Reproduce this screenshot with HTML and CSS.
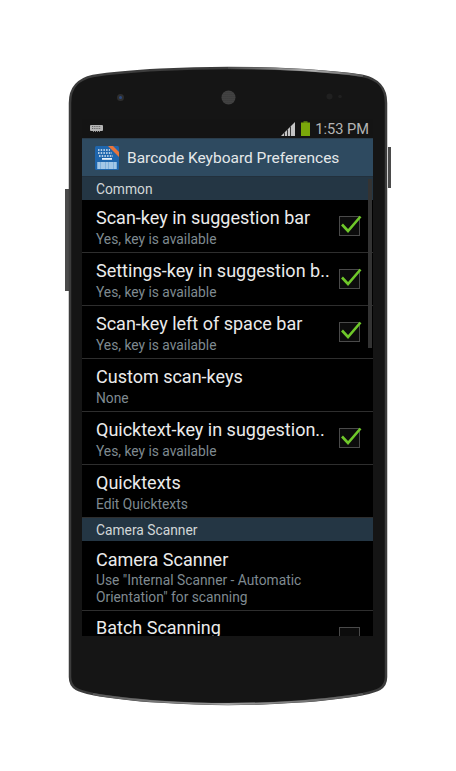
FILE: index.html
```html
<!DOCTYPE html>
<html lang="en">
<head>
  <meta charset="UTF-8" />
  <title>Barcode Keyboard Preferences</title>
  <link rel="stylesheet" href="styles.css">
</head>
<body>

  <div class="phone">
    <svg class="phone-body" width="328" height="640" viewBox="64 66 328 640">
      <defs>
        <linearGradient id="glint-top" gradientUnits="userSpaceOnUse" x1="230" y1="0" x2="365" y2="0">
          <stop offset="0" stop-color="#4a4a4a" />
          <stop offset="0.6" stop-color="#b0b0b0" />
          <stop offset="1" stop-color="#555555" />
        </linearGradient>
        <linearGradient id="glint-bottom" gradientUnits="userSpaceOnUse" x1="93" y1="0" x2="363" y2="0">
          <stop offset="0" stop-color="#555555" />
          <stop offset="0.5" stop-color="#a0a0a0" />
          <stop offset="1" stop-color="#555555" />
        </linearGradient>
        <pattern id="mesh" width="2" height="2" patternUnits="userSpaceOnUse">
          <rect width="2" height="2" fill="#333333" />
          <circle cx="1" cy="1" r="0.600" fill="#6a6a6a" />
        </pattern>
      </defs>
      <rect class="side-key" x="388" y="147" width="3" height="41" />
      <rect class="side-key" x="65" y="189" width="5" height="102" />
      <path class="shell" d="M70 103 C70 86 79 79 93 76 C130 70 190 68 228 68 C266 68 326 70 363 76 C377 79 386 86 386 103 L386 677 C386 689 377 691 363 694 C326 701 266 704 228 704 C190 704 130 701 93 694 C79 691 70 689 70 677 Z" />
      <path class="glint top" d="M228 68 C266 68 326 70 363 76" />
      <path class="glint bottom" d="M93 694 C130 701 190 704 228 704 C266 704 326 701 363 694" />
      <circle class="lens" cx="120.500" cy="97.500" r="3.500" />
      <circle class="lens-dot" cx="120.500" cy="97.500" r="1.500" />
      <circle class="speaker" cx="228.500" cy="97.500" r="7" />
      <circle class="sensor" cx="329.500" cy="96.500" r="3" />
      <circle class="sensor" cx="340" cy="96.500" r="1.800" />
    </svg>

    <div class="screen">
      <div class="status-bar">
        <svg class="kbd-note" width="13" height="8" viewBox="0 0 13 8">
          <rect x="0" y="0" width="13" height="6" rx="1" fill="#b4b4b4" />
          <path d="M2 1.500h9M2 3.500h9" stroke="#444" stroke-width="0.700" stroke-dasharray="1 0.800" />
          <path d="M3 6.500h7" stroke="#888" stroke-width="1" stroke-dasharray="1 1" />
        </svg>
        <div class="status-right">
          <svg width="14" height="14" viewBox="0 0 14 14">
            <path d="M0 14 L14 0 V14 Z" fill="#c4c4c4" />
            <path d="M3.500 14V10.500M6.500 14V7.500M9.500 14V4.500" stroke="#141414" stroke-width="0.800" />
          </svg>
          <svg class="battery" width="9" height="15" viewBox="0 0 9 15">
            <rect x="2.500" y="0" width="4" height="2" fill="#4d6d10" />
            <rect x="0" y="1.500" width="9" height="13.500" fill="#7aa80a" />
          </svg>
          <span class="clock">1:53 PM</span>
        </div>
      </div>

      <div class="action-bar">
        <svg class="app-icon" width="24" height="24" viewBox="0 0 24 24">
          <rect x="0" y="0" width="24" height="24" rx="1.500" fill="#1f66ad" />
          <path d="M3 4h12M3 7h14M4 10h14" stroke="#e3eef8" stroke-width="1.500" stroke-dasharray="1.500 1.200" />
          <rect x="7" y="12" width="10" height="1.800" fill="#e6f1fa" />
          <rect x="2" y="16" width="20" height="7" fill="#7fb0dc" />
          <path d="M4 16v7M7 16v7M9 16v7M12 16v7M15 16v7M17 16v7M20 16v7" stroke="#c8def1" stroke-width="1" />
          <path d="M13 0 H18 L24 6 V11 Z" fill="#e8743b" />
        </svg>
        <span class="action-title">Barcode Keyboard Preferences</span>
      </div>

      <div class="prefs">
        <div class="section">Common</div>

        <div class="row">
          <div class="row-text">
            <div class="row-title">Scan-key in suggestion bar</div>
            <div class="row-sub">Yes, key is available</div>
          </div>
          <div class="check on">
            <svg width="24" height="20" viewBox="0 0 24 20"><path d="M3 9.500 L9 16 L21.500 1.500" /></svg>
          </div>
        </div>

        <div class="row">
          <div class="row-text">
            <div class="row-title">Settings-key in suggestion b..</div>
            <div class="row-sub">Yes, key is available</div>
          </div>
          <div class="check on">
            <svg width="24" height="20" viewBox="0 0 24 20"><path d="M3 9.500 L9 16 L21.500 1.500" /></svg>
          </div>
        </div>

        <div class="row">
          <div class="row-text">
            <div class="row-title">Scan-key left of space bar</div>
            <div class="row-sub">Yes, key is available</div>
          </div>
          <div class="check on">
            <svg width="24" height="20" viewBox="0 0 24 20"><path d="M3 9.500 L9 16 L21.500 1.500" /></svg>
          </div>
        </div>

        <div class="row">
          <div class="row-text">
            <div class="row-title">Custom scan-keys</div>
            <div class="row-sub">None</div>
          </div>
        </div>

        <div class="row">
          <div class="row-text">
            <div class="row-title">Quicktext-key in suggestion..</div>
            <div class="row-sub">Yes, key is available</div>
          </div>
          <div class="check on">
            <svg width="24" height="20" viewBox="0 0 24 20"><path d="M3 9.500 L9 16 L21.500 1.500" /></svg>
          </div>
        </div>

        <div class="row">
          <div class="row-text">
            <div class="row-title">Quicktexts</div>
            <div class="row-sub">Edit Quicktexts</div>
          </div>
        </div>

        <div class="section">Camera Scanner</div>

        <div class="row tall">
          <div class="row-text">
            <div class="row-title">Camera Scanner</div>
            <div class="row-sub">Use "Internal Scanner - Automatic<br>Orientation" for scanning</div>
          </div>
        </div>

        <div class="row batch">
          <div class="row-text">
            <div class="row-title">Batch Scanning</div>
          </div>
          <div class="check"></div>
        </div>
      </div>

      <div class="scrollbar"></div>
    </div>
  </div>

</body>
</html>
```

FILE: styles.css
```css
* {
  box-sizing: border-box;
}

html, body {
  height: 100%;
}

body {
  margin: 0;
  background-color: #ffffff;
  font-family: 'Roboto', sans-serif;
  overflow: hidden;
}

.phone {
  position: relative;
  width: 456px;
  height: 771px;
  padding: 119px 83px 0 82px;
}

.phone-body {
  position: absolute;
  left: 64px;
  top: 66px;
}

.shell {
  fill: #151515;
  stroke: #3c3c3c;
  stroke-width: 2.5;
}

.glint {
  fill: none;
  stroke-width: 2;
}

.glint.top {
  stroke: url(#glint-top);
}

.glint.bottom {
  stroke: url(#glint-bottom);
}

.side-key {
  fill: #4a4a4a;
}

.lens {
  fill: #2e2e2e;
}

.lens-dot {
  fill: #2c4a80;
}

.speaker {
  fill: url(#mesh);
}

.sensor {
  fill: #202020;
}

.screen {
  position: relative;
  width: 291px;
  height: 517px;
  overflow: hidden;
  background-color: #000000;
}

.status-bar {
  display: flex;
  justify-content: space-between;
  align-items: center;
  height: 19px;
  padding: 0 4px 0 8px;
  background-color: #141414;
}

.status-right {
  display: flex;
  align-items: center;
  gap: 6px;
}

.clock {
  margin-left: -1px;
  font-size: 14.600px;
  color: #b4b4b4;
}

.action-bar {
  display: flex;
  align-items: center;
  gap: 8px;
  height: 39px;
  padding-left: 13px;
  background-color: #2e4a60;
  border-top: 1px solid #2b3d4c;
  border-bottom: 1px solid #22303c;
}

.action-title {
  font-size: 15.500px;
  color: #e4e8ea;
  white-space: nowrap;
}

.section {
  display: flex;
  align-items: center;
  height: 23px;
  padding-left: 14px;
  background-color: #243644;
  font-size: 13.800px;
  color: #d2d6d8;
}

.row {
  display: flex;
  align-items: flex-start;
  justify-content: space-between;
  height: 53px;
  padding: 6px 13px 0 14px;
  border-bottom: 1px solid #2e2e2e;
}

.row.tall {
  height: 70px;
  padding-top: 7px;
}

.row.batch {
  padding-top: 5px;
}

.row.batch .check {
  margin-top: 11px;
}

.row-text {
  min-width: 0;
}

.row-title {
  font-size: 18px;
  line-height: 24px;
  color: #ebebeb;
  white-space: nowrap;
}

.row-sub {
  margin-top: 1px;
  font-size: 13.800px;
  line-height: 17px;
  color: #7f8a90;
  white-space: nowrap;
}

.row.tall .row-sub {
  margin-top: 0;
}

.check {
  position: relative;
  flex: none;
  width: 21px;
  height: 20px;
  margin-top: 10px;
  border: 1px solid #4a4a4a;
  background-color: #0c0c0c;
}

.check svg {
  position: absolute;
  left: -1px;
  top: -2px;
}

.check path {
  fill: none;
  stroke: #6fc82a;
  stroke-width: 2.600;
}

.scrollbar {
  position: absolute;
  right: 1px;
  top: 60px;
  width: 4px;
  height: 169px;
  background-color: #333333;
}
```
